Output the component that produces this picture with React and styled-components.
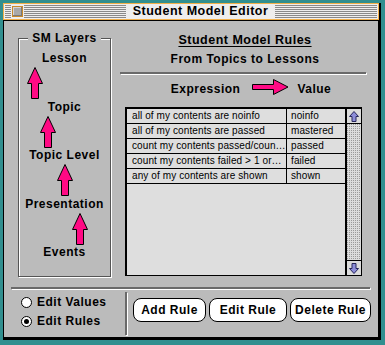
import React from "react";
import styled, { createGlobalStyle } from "styled-components";

const rules = [
  { expr: "all of my contents are noinfo", value: "noinfo" },
  { expr: "all of my contents are passed", value: "mastered" },
  { expr: "count my contents passed/coun…", value: "passed" },
  { expr: "count my contents failed > 1 or…", value: "failed" },
  { expr: "any of my contents are shown", value: "shown" },
];

const layers = [
  { name: "Lesson" },
  { name: "Topic", arrow: 8 },
  { name: "Topic Level", arrow: 21 },
  { name: "Presentation", arrow: 38 },
  { name: "Events", arrow: 53 },
];

const UpArrow = ({ h = 33 }) => (
  <svg width="16" height={h} viewBox={`0 0 16 ${h}`}>
    <polygon
      points={`8,0.5 15.5,16.5 11.5,16.5 11.5,${h - 0.5} 4.5,${h - 0.5} 4.5,16.5 0.5,16.5`}
      fill="#ff0a84"
      stroke="#000"
    />
  </svg>
);

const RightArrow = () => (
  <svg width="37" height="16" viewBox="0 0 37 16">
    <polygon
      points="0.5,5.5 21.5,5.5 21.5,0.5 36,8 21.5,15.5 21.5,10.5 0.5,10.5"
      fill="#ff0a84"
      stroke="#000"
    />
  </svg>
);

const ScrollArrow = ({ down }) => (
  <svg width="10" height="11" viewBox="0 0 10 11">
    <polygon
      points={
        down
          ? "5,10.5 9.5,5.5 7,5.5 7,0.5 3,0.5 3,5.5 0.5,5.5"
          : "5,0.5 9.5,5.5 7,5.5 7,10.5 3,10.5 3,5.5 0.5,5.5"
      }
      fill="#8c8cd8"
      stroke="#26265a"
    />
  </svg>
);

const App = () => {
  return (
    <>
      <GlobalStyle />
      <Desktop>
        <Window>
          <TitleBar>
            <Stripes $w={6} />
            <CloseBox />
            <Stripes />
            <WindowTitle>Student Model Editor</WindowTitle>
            <Stripes />
          </TitleBar>
          <Body>
            <TopRow>
              <GroupBox>
                <GroupTitle>SM Layers</GroupTitle>
                {layers.map((l) => (
                  <React.Fragment key={l.name}>
                    {l.arrow !== undefined && (
                      <LayerArrow $left={l.arrow}>
                        <UpArrow h={32} />
                      </LayerArrow>
                    )}
                    <LayerName $first={l.arrow === undefined}>{l.name}</LayerName>
                  </React.Fragment>
                ))}
              </GroupBox>
              <RulesPanel>
                <RulesTitle>Student Model Rules</RulesTitle>
                <RulesSub>From Topics to Lessons</RulesSub>
                <Rule $w={246} $top={6} />
                <ExprRow>
                  <Heading>Expression</Heading>
                  <ArrowSlot>
                    <RightArrow />
                  </ArrowSlot>
                  <Heading>Value</Heading>
                </ExprRow>
                <ListBox>
                  <Rows>
                    {rules.map((r) => (
                      <RowLine key={r.expr}>
                        <ExprCell>{r.expr}</ExprCell>
                        <ValueCell>{r.value}</ValueCell>
                      </RowLine>
                    ))}
                  </Rows>
                  <ScrollBar>
                    <ScrollButton>
                      <ScrollArrow />
                    </ScrollButton>
                    <Track />
                    <ScrollButton $down>
                      <ScrollArrow down />
                    </ScrollButton>
                  </ScrollBar>
                </ListBox>
              </RulesPanel>
            </TopRow>
            <BottomRule />
            <BottomRow>
              <RadioColumn>
                <RadioItem>
                  <RadioCircle />
                  <RadioLabel>Edit Values</RadioLabel>
                </RadioItem>
                <RadioItem>
                  <RadioCircle $checked />
                  <RadioLabel>Edit Rules</RadioLabel>
                </RadioItem>
              </RadioColumn>
              <VDivider />
              <ButtonRow>
                <MacButton $w={73}>Add Rule</MacButton>
                <MacButton $w={78}>Edit Rule</MacButton>
                <MacButton $w={81}>Delete Rule</MacButton>
              </ButtonRow>
            </BottomRow>
          </Body>
        </Window>
      </Desktop>
    </>
  );
};

//styled components
const GlobalStyle = createGlobalStyle`
  html, body {
    margin: 0;
    padding: 0;
  }
  body {
    width: 385px;
    height: 345px;
    overflow: hidden;
    background: #318f8f;
    font-family: "Liberation Sans", Arial, sans-serif;
    color: #000;
  }
`;

const Desktop = styled.div`
  padding: 3px 0 0 3px;
`;

const Window = styled.div`
  width: 376px;
  border-right: 2px solid #000;
  border-bottom: 2px solid #000;
`;

const TitleBar = styled.div`
  height: 17px;
  box-sizing: border-box;
  border: 1px solid #f2b04a;
  background: #eeeeee;
  display: flex;
  align-items: center;
  padding: 0 1px;
`;

const Stripes = styled.div`
  height: 13px;
  flex: ${(p) => (p.$w ? `0 0 ${p.$w}px` : "1")};
  background: repeating-linear-gradient(
    to bottom,
    #8a8a8a 0 1px,
    #eeeeee 1px 2px
  );
`;

const CloseBox = styled.div`
  width: 11px;
  height: 11px;
  box-sizing: border-box;
  margin: 0 1px;
  border: 1px solid #c98a2c;
  background: #a9a9a9;
  box-shadow: inset -1px -1px 0 #7a7a7a, inset 1px 1px 0 #d4d4d4;
`;

const WindowTitle = styled.div`
  padding: 0 7px;
  font-size: 12.5px;
  font-weight: bold;
  letter-spacing: 0.5px;
  line-height: 15px;
  white-space: nowrap;
`;

const Body = styled.div`
  height: 318px;
  box-sizing: border-box;
  border: 1px solid #000;
  background: #bbbbbb;
  display: flex;
  flex-direction: column;
`;

const TopRow = styled.div`
  display: flex;
  align-items: flex-start;
`;

const GroupBox = styled.div`
  margin: 17px 0 0 14px;
  width: 93px;
  height: 239px;
  box-sizing: border-box;
  border: 1px solid #555;
  box-shadow: 1px 1px 0 #fff, inset 1px 1px 0 #fff;
  display: flex;
  flex-direction: column;
  align-items: center;
`;

const BoldText = styled.div`
  font-size: 12px;
  font-weight: bold;
  letter-spacing: 0.5px;
  line-height: 10px;
  white-space: nowrap;
`;

const GroupTitle = styled(BoldText)`
  margin-top: -6px;
  padding: 0 4px;
  background: #bbbbbb;
`;

const LayerName = styled(BoldText)`
  margin-top: ${(p) => (p.$first ? "10px" : "0")};
`;

const LayerArrow = styled.div`
  align-self: flex-start;
  margin: 4px 0 2.5px ${(p) => p.$left}px;
  height: 32px;
  display: flex;
`;

const RulesPanel = styled.div`
  margin-left: 9px;
  width: 250px;
  display: flex;
  flex-direction: column;
  align-items: center;
`;

const RulesTitle = styled.div`
  margin-top: 12px;
  font-size: 12.5px;
  font-weight: bold;
  letter-spacing: 0.5px;
  line-height: 14px;
  text-decoration: underline;
  text-underline-offset: 2px;
`;

const RulesSub = styled(RulesTitle)`
  margin-top: 5px;
  font-size: 12px;
  text-decoration: none;
`;

const Rule = styled.div`
  align-self: flex-start;
  width: ${(p) => p.$w}px;
  margin-top: ${(p) => p.$top}px;
  height: 2px;
  background: #6a6a6a;
  box-shadow: 1px 1px 0 #fff;
`;

const ExprRow = styled.div`
  margin-top: 5px;
  padding-left: 12px;
  display: flex;
  align-items: flex-start;
`;

const Heading = styled(BoldText)`
  margin-top: 5px;
`;

const ArrowSlot = styled.div`
  display: flex;
  margin: 0 8px 0 12px;
`;

const ListBox = styled.div`
  align-self: flex-start;
  margin: 12px 0 0 5px;
  width: 237px;
  height: 169px;
  box-sizing: border-box;
  border: solid #000;
  border-width: 2px 1px 1px 2px;
  display: flex;
  background: #dedede;
`;

const Rows = styled.div`
  flex: 1;
  display: flex;
  flex-direction: column;
`;

const RowLine = styled.div`
  display: grid;
  grid-template-columns: 160px 1fr;
  height: 15px;
  box-sizing: border-box;
  border-bottom: 1px solid #000;
  font-size: 10px;
  letter-spacing: 0.1px;
  line-height: 14px;
`;

const ExprCell = styled.div`
  padding-left: 5px;
  border-right: 1px solid #000;
  white-space: nowrap;
  overflow: hidden;
`;

const ValueCell = styled.div`
  padding-left: 4px;
  white-space: nowrap;
`;

const ScrollBar = styled.div`
  width: 16px;
  box-sizing: border-box;
  border-left: 2px solid #000;
  display: flex;
  flex-direction: column;
`;

const ScrollButton = styled.div`
  height: 15px;
  box-sizing: border-box;
  ${(p) => (p.$down ? "border-top: 1px solid #000;" : "border-bottom: 1px solid #000;")}
  background: #dcdcdc;
  display: flex;
  align-items: center;
  justify-content: center;
`;

const Track = styled.div`
  flex: 1;
  background-color: #dcdcdc;
  background-image: conic-gradient(at 1px 1px, transparent 75%, #9a9a9a 0);
  background-size: 2px 2px;
`;

const BottomRule = styled.div`
  margin: 10px 8px 0 7px;
  height: 2px;
  background: #6a6a6a;
  box-shadow: 1px 1px 0 #fff;
`;

const BottomRow = styled.div`
  display: flex;
  align-items: flex-start;
`;

const RadioColumn = styled.div`
  width: 121px;
  box-sizing: border-box;
  padding: 8px 0 0 17px;
  display: flex;
  flex-direction: column;
  gap: 8px;
`;

const RadioItem = styled.div`
  display: flex;
  align-items: center;
  gap: 5px;
  height: 11px;
`;

const RadioCircle = styled.div`
  width: 11px;
  height: 11px;
  box-sizing: border-box;
  border: 1px solid #000;
  border-radius: 50%;
  background: #fff;
  display: flex;
  align-items: center;
  justify-content: center;
  &::after {
    content: "";
    width: 5px;
    height: 5px;
    border-radius: 50%;
    background: ${(p) => (p.$checked ? "#000" : "transparent")};
  }
`;

const RadioLabel = styled(BoldText)`
  line-height: 11px;
`;

const VDivider = styled.div`
  margin-top: 3px;
  width: 2px;
  height: 43px;
  background: #6a6a6a;
  box-shadow: 1px 1px 0 #fff;
`;

const ButtonRow = styled.div`
  margin: 9px 0 0 6px;
  display: flex;
  gap: 3px;
`;

const MacButton = styled.button`
  width: ${(p) => p.$w}px;
  height: 24px;
  padding: 0;
  border: 1px solid #000;
  border-radius: 8px;
  background: #fff;
  color: #000;
  font-family: "Liberation Sans", Arial, sans-serif;
  font-size: 12px;
  font-weight: bold;
  letter-spacing: 0.5px;
  white-space: nowrap;
`;

export default App;
